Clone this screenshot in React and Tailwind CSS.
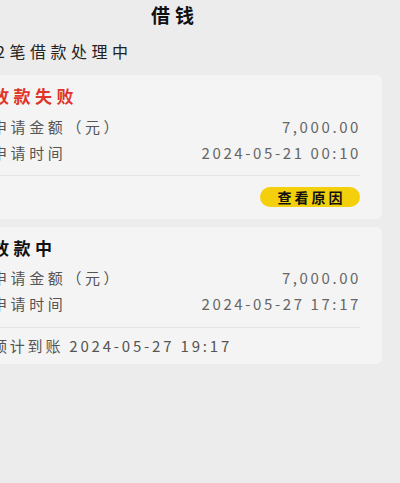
import React from 'react';

const font = { fontFamily: '"Noto Sans CJK SC", "Noto Sans", sans-serif' };

function Row({ label, value }) {
  return (
    <div className="flex items-center justify-between h-[26px] text-[15px]">
      <span className="text-[#555] tracking-[3.6px]">{label}</span>
      <span className="text-[#666] tracking-[2.6px] mr-[-1px]">{value}</span>
    </div>
  );
}

export default function App() {
  return (
    <div className="w-[400px] h-[483px] overflow-hidden bg-[#ececec]" style={font}>
      {/* 标题 */}
      <div className="h-[30px] pt-[2px] pl-[151px] text-[19px] font-bold tracking-[5px] text-[#111] leading-[26px]">
        借钱
      </div>

      <div className="mt-[8px] ml-[-4px] h-[26px] leading-[26px] text-[16px] tracking-[4.5px] text-[#222]">
        2笔借款处理中
      </div>

      {/* 放款失败 */}
      <div className="mt-[11px] ml-[-20px] w-[402px] rounded-[6px] bg-[#f4f4f4] pl-[12px] pr-[22px] pt-[9px] pb-[12px]">
        <div className="h-[24px] leading-[24px] text-[17px] font-bold tracking-[4.5px] text-[#e0352b]">放款失败</div>
        <div className="mt-[6px]">
          <Row label="申请金额（元）" value="7,000.00" />
          <Row label="申请时间" value="2024-05-21 00:10" />
        </div>
        <div className="mt-[9px] h-px bg-[#e4e4e4]" />
        <div className="mt-[11px] flex justify-end">
          <button className="h-[20px] w-[100px] rounded-full bg-[#f3cf0c] pl-[3px] text-[14px] font-bold tracking-[3px] text-[#111] leading-[20px]">
            查看原因
          </button>
        </div>
      </div>

      {/* 放款中 */}
      <div className="mt-[8px] ml-[-20px] w-[402px] rounded-[6px] bg-[#f4f4f4] pl-[12px] pr-[22px] pt-[9px] pb-[5px]">
        <div className="h-[24px] leading-[24px] text-[17px] font-bold tracking-[4.5px] text-[#111]">放款中</div>
        <div className="mt-[5px]">
          <Row label="申请金额（元）" value="7,000.00" />
          <Row label="申请时间" value="2024-05-27 17:17" />
        </div>
        <div className="mt-[10px] h-px bg-[#e4e4e4]" />
        <div className="mt-[5px] h-[26px] leading-[26px] text-[15px] tracking-[2.8px] text-[#555]">
          预计到账 2024-05-27 19:17
        </div>
      </div>
    </div>
  );
}
